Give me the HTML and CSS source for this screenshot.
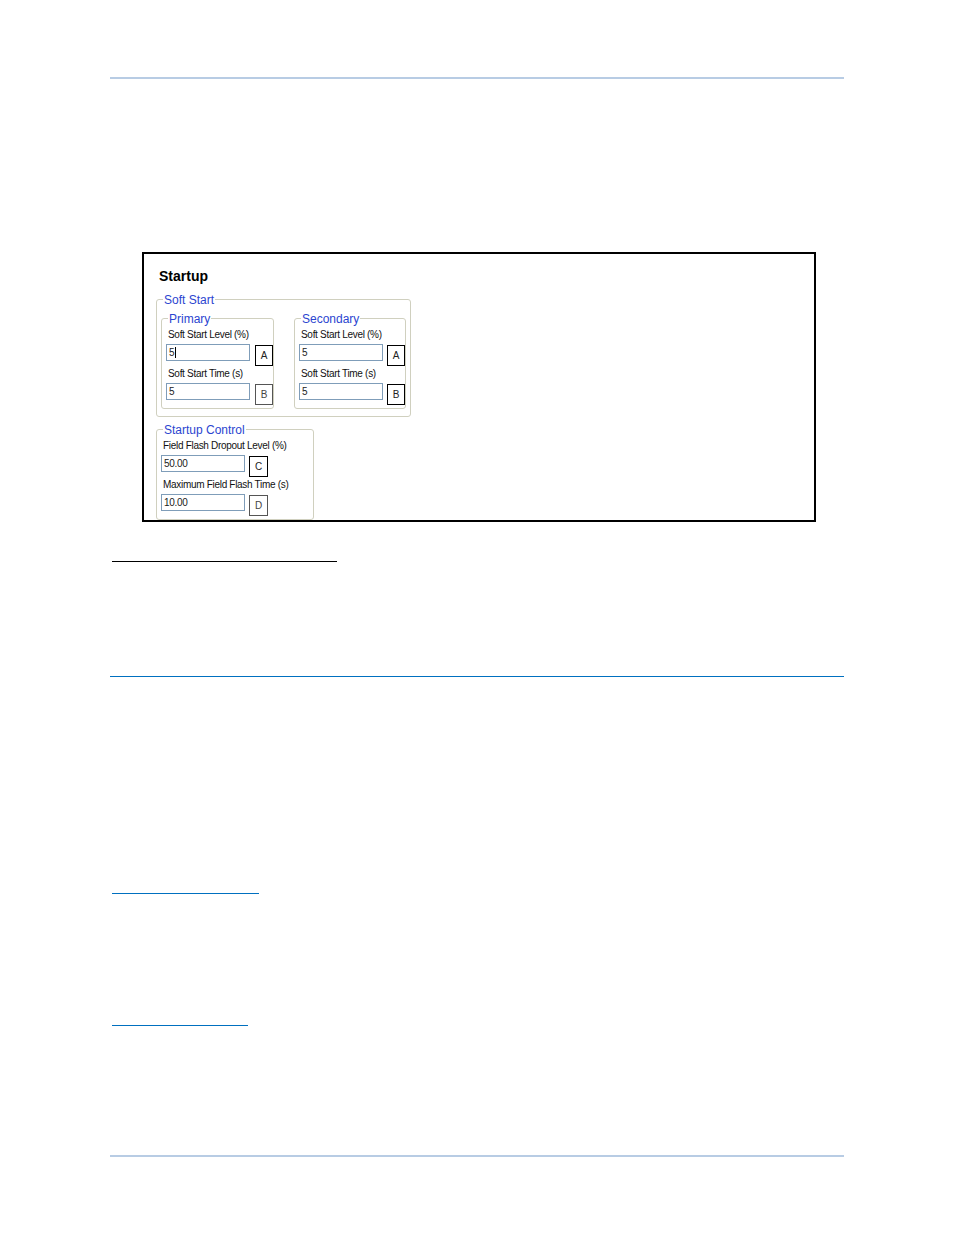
FILE: index.html
```html
<!DOCTYPE html>
<html>
<head>
<meta charset="utf-8">
<title>Startup</title>
<link rel="stylesheet" href="styles.css">
</head>
<body>
<div class="page">
  <div class="rule-light"></div>
  <div class="figure">
    <div class="title">Startup</div>
    <div class="group soft-start">
      <span class="legend">Soft Start</span>
      <div class="sub-row">
        <div class="group primary">
          <span class="legend">Primary</span>
          <div class="label">Soft Start Level (%)</div>
          <div class="field-row">
            <div class="input">5<span class="caret"></span></div>
            <div class="btn">A</div>
          </div>
          <div class="label label-2">Soft Start Time (s)</div>
          <div class="field-row">
            <div class="input">5</div>
            <div class="btn btn-gray">B</div>
          </div>
        </div>
        <div class="group secondary">
          <span class="legend">Secondary</span>
          <div class="label">Soft Start Level (%)</div>
          <div class="field-row">
            <div class="input">5</div>
            <div class="btn">A</div>
          </div>
          <div class="label label-2">Soft Start Time (s)</div>
          <div class="field-row">
            <div class="input">5</div>
            <div class="btn">B</div>
          </div>
        </div>
      </div>
    </div>
    <div class="group startup-control">
      <span class="legend">Startup Control</span>
      <div class="label">Field Flash Dropout Level (%)</div>
      <div class="field-row">
        <div class="input">50.00</div>
        <div class="btn">C</div>
      </div>
      <div class="label label-2">Maximum Field Flash Time (s)</div>
      <div class="field-row">
        <div class="input">10.00</div>
        <div class="btn btn-gray">D</div>
      </div>
    </div>
  </div>
  <div class="line-black"></div>
  <div class="line-blue"></div>
  <div class="link-line link-1"></div>
  <div class="link-line link-2"></div>
  <div class="rule-light rule-bottom"></div>
</div>
</body>
</html>
```
FILE: styles.css
```css
* { box-sizing: border-box; }
html, body { margin: 0; padding: 0; background: #fff; }
body { font-family: "Liberation Sans", Arial, sans-serif; color: #000; }

.page {
  width: 734px;
  margin-left: 110px;
  padding-top: 77px;
  padding-bottom: 60px;
}

.rule-light { height: 2px; background: #b8cce4; }
.rule-bottom { margin-top: 129px; }

.figure {
  margin-top: 173px;
  margin-left: 32px;
  width: 674px;
  height: 270px;
  border: 2px solid #000;
  padding: 14px 0 0 12px;
}

.title {
  font-size: 14px;
  font-weight: bold;
  line-height: 16px;
  margin-left: 3px;
}

.group {
  border: 1px solid #d0d0bf;
  border-radius: 3px;
}

.legend {
  display: block;
  width: fit-content;
  margin: -7px 0 0 6px;
  padding: 0 1px;
  background: #fff;
  color: #2b45d0;
  font-size: 12px;
  line-height: 14px;
}

.soft-start {
  margin-top: 15px;
  width: 255px;
  height: 118px;
}

.sub-row {
  display: flex;
  gap: 20px;
  margin-top: 11px;
  padding-left: 4px;
}

.primary { width: 113px; height: 91px; }
.secondary { width: 112px; height: 91px; }
.secondary .field-row { gap: 4px; }

.startup-control {
  margin-top: 12px;
  width: 158px;
  height: 91px;
}
.startup-control .field-row { gap: 4px; }
.startup-control .btn { width: 19px; }

.label {
  font-size: 10px;
  line-height: 12px;
  letter-spacing: -0.3px;
  margin-top: 3px;
  padding-left: 6px;
  white-space: nowrap;
  color: #111;
}
.label-2 { margin-top: 2px; }

.field-row {
  display: flex;
  align-items: flex-start;
  gap: 5px;
  margin-top: 3px;
  padding-left: 4px;
}

.input {
  width: 84px;
  height: 17px;
  border: 1px solid #7f9db9;
  font-size: 10px;
  line-height: 15px;
  padding-left: 2px;
  letter-spacing: -0.3px;
  display: flex;
  align-items: center;
  color: #222;
}

.caret {
  display: inline-block;
  width: 1px;
  height: 11px;
  background: #000;
  margin-left: 1px;
}

.btn {
  width: 18px;
  height: 21px;
  margin-top: 1px;
  border: 1px solid #000;
  background: #fff;
  font-size: 10px;
  line-height: 19px;
  text-align: center;
  color: #222;
}
.btn-gray { border-color: #555; color: #444; }

.line-black {
  margin-top: 39px;
  margin-left: 2px;
  width: 225px;
  height: 1px;
  background: #000;
}

.line-blue {
  margin-top: 114px;
  height: 1px;
  background: #0070c0;
}

.link-line {
  height: 1px;
  margin-left: 2px;
  background: #0070c0;
}
.link-1 { margin-top: 216px; width: 147px; }
.link-2 { margin-top: 131px; width: 136px; }
```
